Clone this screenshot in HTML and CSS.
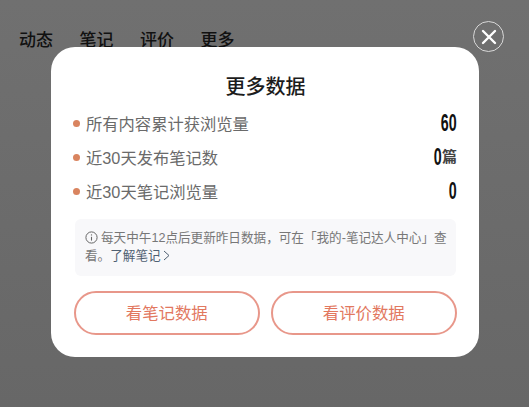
FILE: index.html
```html
<!DOCTYPE html>
<html lang="zh-CN">

<head>
  <meta charset="UTF-8">
  <meta name="viewport" content="width=device-width, initial-scale=1.0">
  <title>更多数据</title>
  <link rel="stylesheet" href="styles.css">
</head>

<body>
  <nav class="tabs">
    <span>动态</span>
    <span>笔记</span>
    <span>评价</span>
    <span>更多</span>
  </nav>
  <button class="closeBtn" aria-label="关闭">
    <svg width="16" height="16" viewBox="0 0 16 16">
      <path d="M2 2L14 14M14 2L2 14" stroke="#fff" stroke-width="2.4" stroke-linecap="round" fill="none" />
    </svg>
  </button>
  <div class="modal">
    <h1 class="modalTitle">更多数据</h1>
    <ul class="stats">
      <li class="statRow">
        <span class="dot"></span>
        <span class="statLabel">所有内容累计获浏览量</span>
        <span class="statValue"><span class="statNum">60</span></span>
      </li>
      <li class="statRow">
        <span class="dot"></span>
        <span class="statLabel">近30天发布笔记数</span>
        <span class="statValue"><span class="statNum">0</span><small class="statUnit">篇</small></span>
      </li>
      <li class="statRow">
        <span class="dot"></span>
        <span class="statLabel">近30天笔记浏览量</span>
        <span class="statValue"><span class="statNum">0</span></span>
      </li>
    </ul>
    <div class="notice">
      <svg class="infoIcon" width="13" height="13" viewBox="0 0 13 13">
        <circle cx="6.5" cy="6.5" r="5.6" stroke="#666" stroke-width="1" fill="none" />
        <path d="M6.5 5.8V9.6" stroke="#666" stroke-width="1.1" fill="none" />
        <circle cx="6.5" cy="3.9" r="0.7" fill="#666" />
      </svg><span>每天中午12点后更新昨日数据，可在「我的-笔记达人中心」查看。</span><a class="noticeLink">了解笔记<svg width="7" height="11" viewBox="0 0 7 11"><path d="M1 1L6 5.5L1 10" stroke="#4f6072" stroke-width="1" fill="none" /></svg></a>
    </div>
    <div class="actions">
      <button class="actionBtn">看笔记数据</button>
      <button class="actionBtn">看评价数据</button>
    </div>
  </div>
</body>

</html>
```

FILE: styles.css
```css
html,
body {
  margin: 0;
  height: 100%;
}

body {
  width: 529px;
  height: 407px;
  overflow: hidden;
  position: relative;
  background: linear-gradient(#707070, #676767);
  font-family: "Liberation Sans", "Noto Sans CJK SC", sans-serif;
  box-sizing: border-box;
  padding-top: 28px;
}

.tabs {
  display: flex;
  gap: 26.5px;
  padding-left: 19px;
  height: 19px;
  font-size: 17px;
  line-height: 25px;
  font-weight: 500;
  color: #111;
}

.closeBtn {
  position: absolute;
  top: 21px;
  left: 473px;
  width: 31px;
  height: 31px;
  padding: 0;
  border: 1px solid #d8d8d8;
  border-radius: 50%;
  background: none;
  display: flex;
  align-items: center;
  justify-content: center;
}

.modal {
  position: relative;
  box-sizing: border-box;
  width: 428px;
  height: 310px;
  margin: 0 0 0 51px;
  background-color: #fff;
  border-radius: 24px;
  padding: 26px 22px 0;
}

.modalTitle {
  margin: 0 0 0 1px;
  font-size: 20px;
  line-height: 28px;
  font-weight: 500;
  color: #1c1c1c;
  text-align: center;
}

.stats {
  list-style: none;
  margin: 5px 0 0;
  padding: 0;
}

.statRow {
  display: flex;
  align-items: center;
  height: 34px;
}

.dot {
  width: 7px;
  height: 7px;
  border-radius: 50%;
  background-color: #d9845f;
  margin-right: 6px;
}

.statLabel {
  flex: 1;
  font-size: 16.3px;
  color: #6a6a6a;
}

.statValue {
  display: flex;
  align-items: center;
}

.statNum {
  font-size: 23px;
  font-weight: 700;
  color: #111;
  transform: scaleX(0.62);
  transform-origin: right center;
}

.statUnit {
  font-size: 15px;
  line-height: 17px;
  font-weight: 700;
  color: #444;
  margin-bottom: 2px;
}

.notice {
  box-sizing: border-box;
  margin-top: 11px;
  margin-left: 2px;
  width: 381px;
  height: 57px;
  padding: 10px 9px 0 10px;
  background-color: #f8f8fa;
  border-radius: 6px;
  font-size: 12.6px;
  line-height: 18px;
  color: #777;
}

.infoIcon {
  vertical-align: -2px;
  margin-right: 3px;
}

.noticeLink {
  color: #4f6072;
}

.noticeLink svg {
  margin-left: 2px;
  vertical-align: -1px;
}

.actions {
  display: flex;
  gap: 11.5px;
  margin-top: 15px;
  margin-left: 1px;
}

.actionBtn {
  width: 185.5px;
  height: 44px;
  padding: 0 0 2px;
  background: #fff;
  border: 2px solid #e8978a;
  border-radius: 22px;
  font-family: inherit;
  font-size: 16.4px;
  color: #e2785f;
}
```
